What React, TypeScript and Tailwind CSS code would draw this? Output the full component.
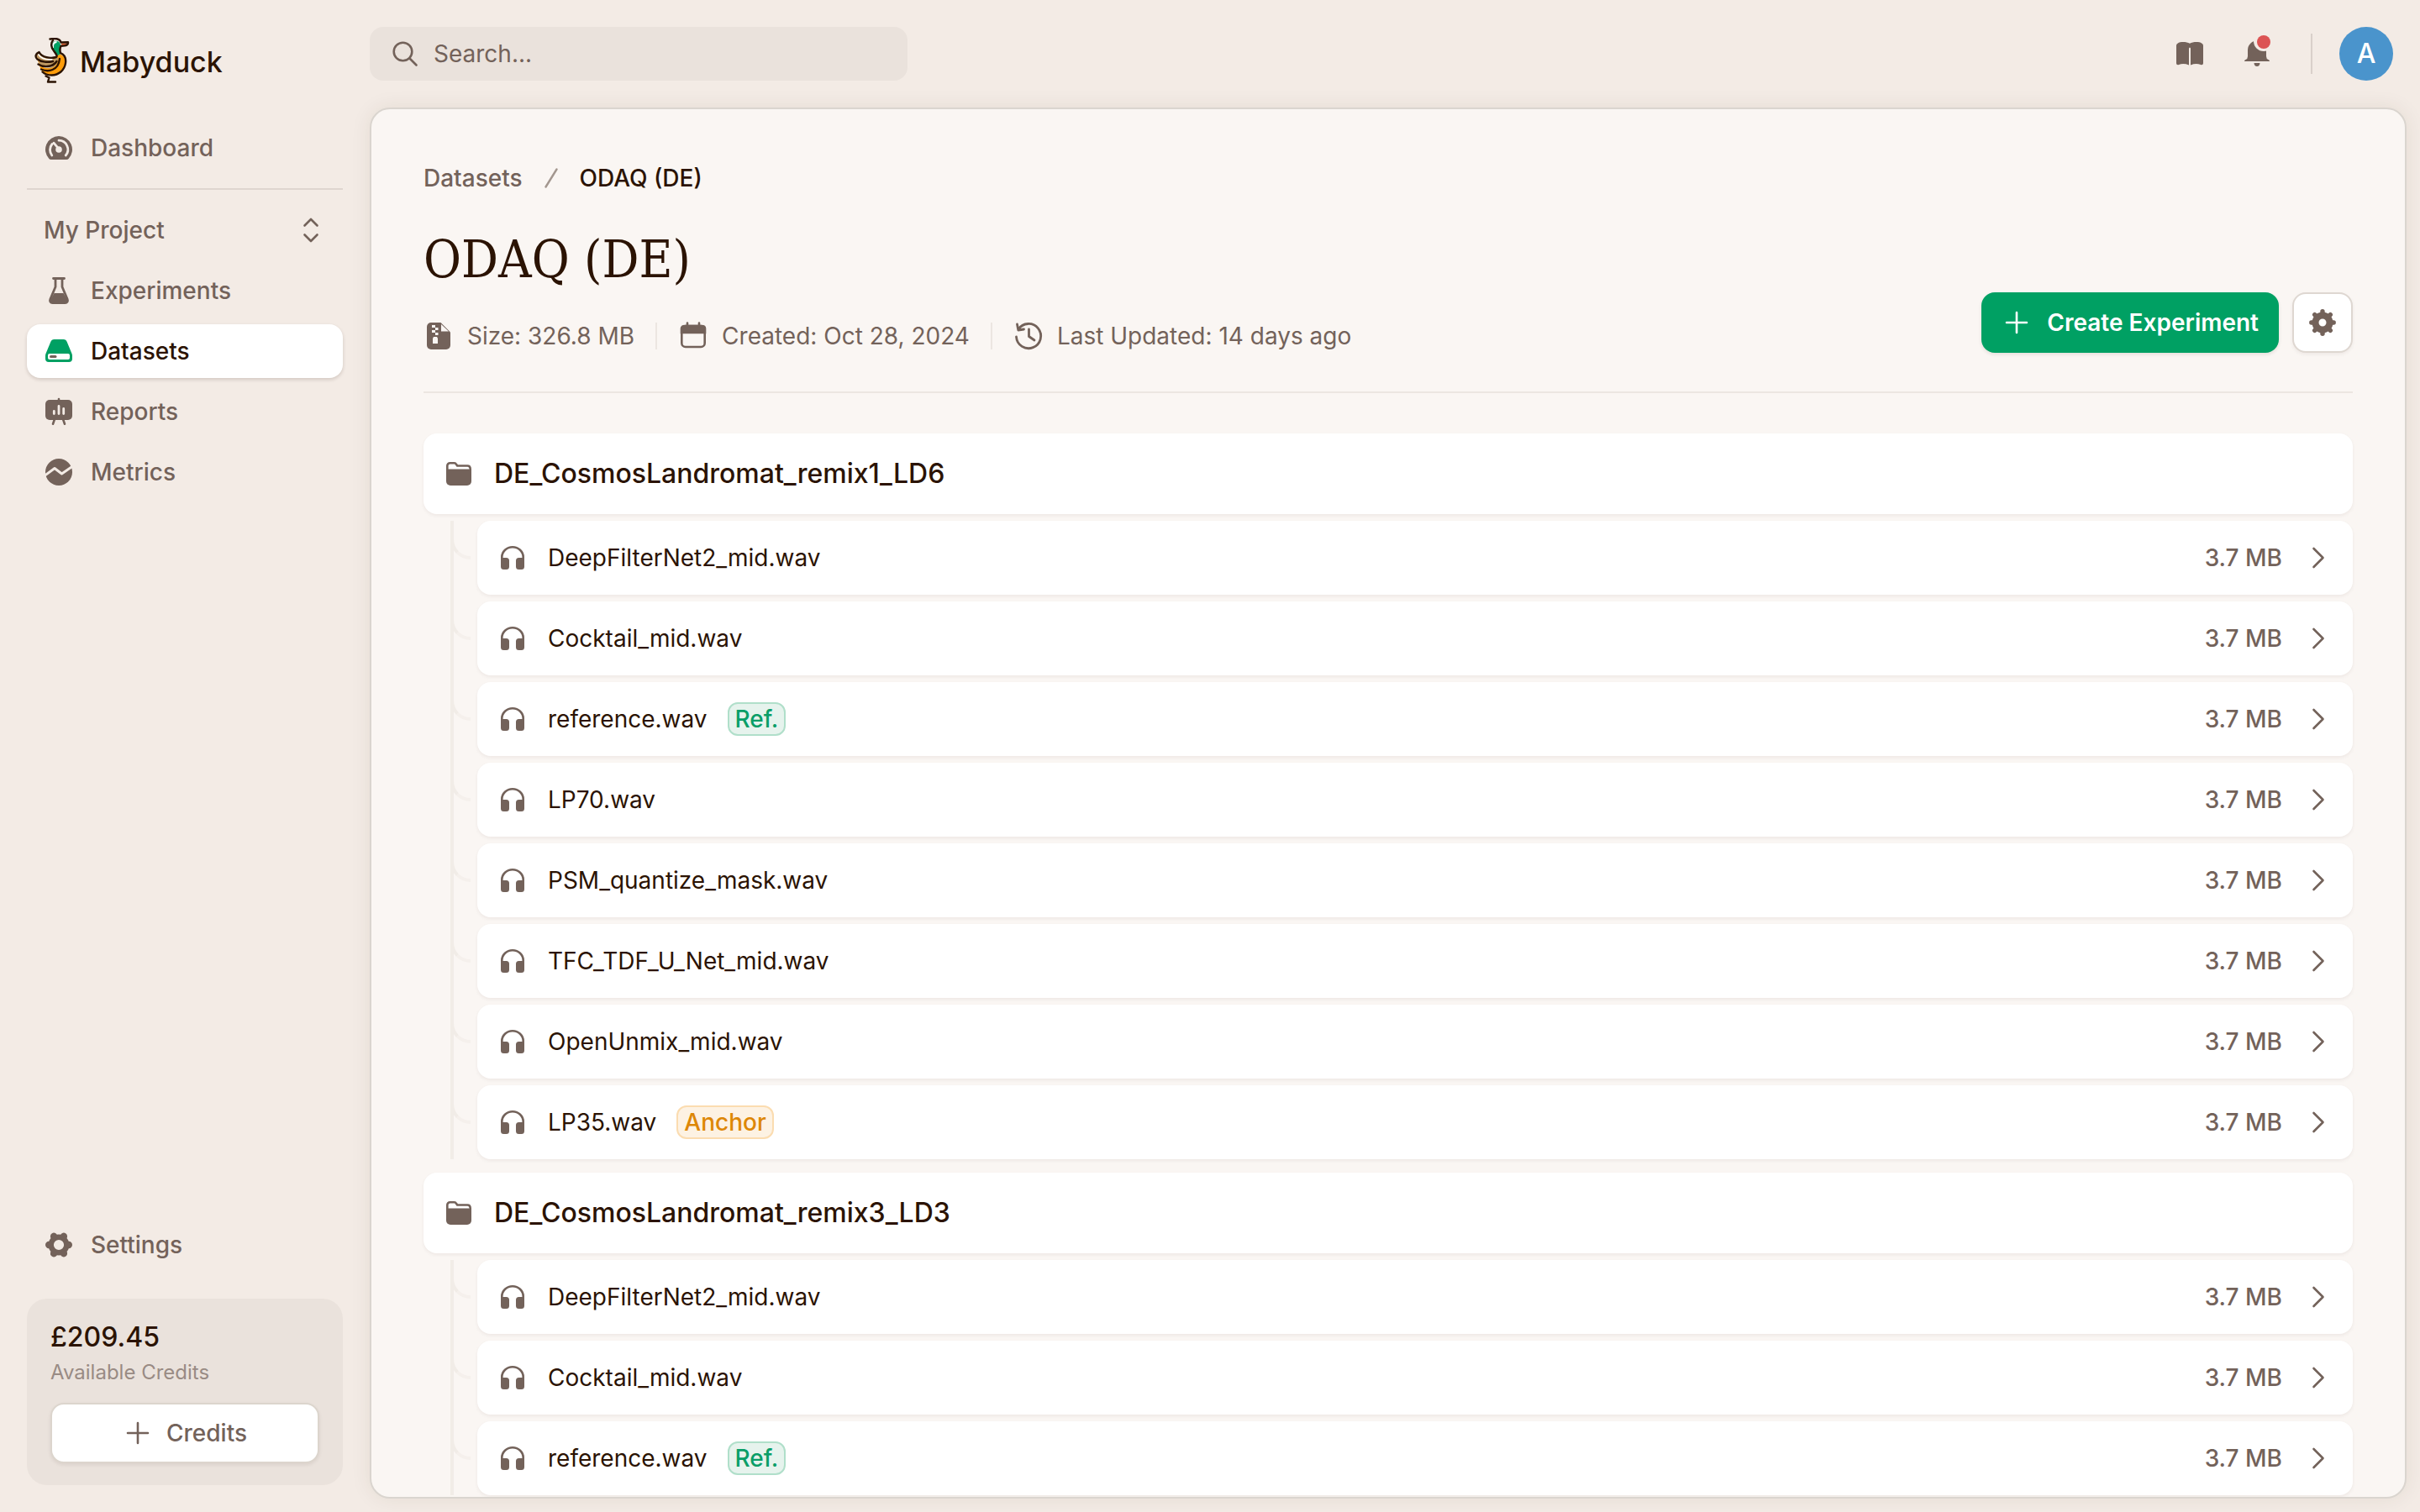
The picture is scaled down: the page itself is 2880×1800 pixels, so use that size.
import type React from "react"

interface IconProps {
  children: React.ReactNode
  className?: string
}

interface AudioFile {
  name: string
  size: string
  tag?: "Ref." | "Anchor"
}

interface Folder {
  name: string
  files: AudioFile[]
}

const folders: Folder[] = [
  {
    name: "DE_CosmosLandromat_remix1_LD6",
    files: [
      { name: "DeepFilterNet2_mid.wav", size: "3.7 MB" },
      { name: "Cocktail_mid.wav", size: "3.7 MB" },
      { name: "reference.wav", size: "3.7 MB", tag: "Ref." },
      { name: "LP70.wav", size: "3.7 MB" },
      { name: "PSM_quantize_mask.wav", size: "3.7 MB" },
      { name: "TFC_TDF_U_Net_mid.wav", size: "3.7 MB" },
      { name: "OpenUnmix_mid.wav", size: "3.7 MB" },
      { name: "LP35.wav", size: "3.7 MB", tag: "Anchor" },
    ],
  },
  {
    name: "DE_CosmosLandromat_remix3_LD3",
    files: [
      { name: "DeepFilterNet2_mid.wav", size: "3.7 MB" },
      { name: "Cocktail_mid.wav", size: "3.7 MB" },
      { name: "reference.wav", size: "3.7 MB", tag: "Ref." },
    ],
  },
]

const Icon: React.FC<IconProps> = ({ children, className = "" }) => (
  <svg viewBox="0 0 36 36" fill="currentColor" aria-hidden="true" className={`h-9 w-9 shrink-0 ${className}`}>
    {children}
  </svg>
)

const stroke = {
  fill: "none",
  stroke: "currentColor",
  strokeWidth: 2.6,
  strokeLinecap: "round",
  strokeLinejoin: "round",
} as const

const DashboardIcon = () => (
  <Icon>
    <path d="M18 4a16 16 0 0 0-11.600 27q.9 1 2.300 1h18.600q1.400 0 2.300-1A16 16 0 0 0 18 4Z" />
    <path
      d="M9.800 27a10.800 10.800 0 0 1 .2-13.500M18 9.200a10.800 10.800 0 0 1 8.200 17.800M12 12.200l5 6"
      fill="none"
      stroke="#f3ebe5"
      strokeWidth="2.800"
      strokeLinecap="round"
    />
    <circle cx="18" cy="20" r="3.800" fill="#f3ebe5" />
  </Icon>
)

const FlaskIcon = () => (
  <Icon>
    <path d="M11.500 3.500h13M14 4v9.500L7.800 28.200c-.9 2.200.3 4.300 2.700 4.300h15c2.400 0 3.600-2.100 2.700-4.300L22 13.500V4" {...stroke} strokeWidth={2.8} />
    <path d="M12.500 21h11l4.500 8q.5 3-3 3.500H11q-3.500-.5-3-3.500Z" />
  </Icon>
)

const DatasetIcon = () => (
  <Icon>
    <path d="M12.500 4h11a4.500 4.500 0 0 1 4.200 3L33.500 21q.5 1.200.5 2.500v3.500a4 4 0 0 1-4 4H6a4 4 0 0 1-4-4v-3.500Q2 22.200 2.500 21L8.300 7a4.500 4.500 0 0 1 4.200-3Z" />
    <rect x="5" y="21" width="26" height="7" rx="2" fill="#fff" />
    <rect x="7" y="23" width="8.500" height="3" rx="1.500" fill="#73625a" />
  </Icon>
)

const ReportsIcon = () => (
  <Icon>
    <rect x="2" y="4" width="32" height="24" rx="5" />
    <path d="M18 3v3M13 27l-2 5.700M23 27l2 5.700" {...stroke} />
    <path d="M12.300 17.500v3M18 11.500v9M23.700 14.500v6" stroke="#f3ebe5" strokeWidth="2.800" strokeLinecap="round" />
  </Icon>
)

const MetricsIcon = () => (
  <Icon>
    <circle cx="18" cy="18" r="16" />
    <path d="M0 23 13 13.500l8.500 6.500L36 10" fill="none" stroke="#f3ebe5" strokeWidth="3" strokeLinejoin="round" />
  </Icon>
)

const SettingsIcon = () => (
  <Icon>
    <circle cx="18" cy="18" r="9.300" fill="none" stroke="currentColor" strokeWidth="6.400" />
    {[0, 60, 120, 180, 240, 300].map((angle) => (
      <circle key={angle} cx="29.800" cy="18" r="4.200" transform={`rotate(${angle} 18 18)`} />
    ))}
  </Icon>
)

const CogIcon = () => (
  <Icon>
    <circle cx="18" cy="18" r="8.500" fill="none" stroke="currentColor" strokeWidth="8" />
    {[0, 45, 90, 135, 180, 225, 270, 315].map((angle) => (
      <path key={angle} d="M28 18h3.200" {...stroke} strokeWidth={5.4} transform={`rotate(${angle} 18 18)`} />
    ))}
  </Icon>
)

const SelectIcon = () => (
  <Icon>
    <path d="m10.500 12.500 7.500-7.500 7.500 7.500M10.500 23.500l7.500 7.500 7.500-7.500" {...stroke} />
  </Icon>
)

const SearchIcon = () => (
  <Icon>
    <circle cx="15.500" cy="15.500" r="10.800" {...stroke} />
    <path d="m23.500 23.500 8 8" {...stroke} />
  </Icon>
)

const BookIcon = () => (
  <Icon>
    <path d="M18 5.800C14.500 4 7.500 3.200 3.500 5.700Q2 6.600 2 8.300v20.700c0 2 1.500 2.600 3 2 3.500-1.300 8-1.200 12 .5V12q0-1.500 1-1.500t1 1.500v19.500c4-1.700 8.500-1.800 12-.5 1.500.6 3 0 3-2V8.300q0-1.700-1.500-2.600C28.500 3.200 21.500 4 18 5.800Z" />
  </Icon>
)

const BellIcon = () => (
  <Icon>
    <path d="M18 2.500A11 11 0 0 0 7 13.500v7.500q0 3-2.500 4.100-1.500.7-1.500 1.900h30q0-1.200-1.500-1.900Q29 24 29 21v-7.500a11 11 0 0 0-11-11ZM14.500 29h7q-.3 4-3.500 4t-3.500-4Z" />
    <circle cx="26" cy="3" r="12" fill="#f3ebe5" />
  </Icon>
)

const ArchiveIcon = () => (
  <Icon>
    <path d="M9 2h11.500L32 13.500V29a5 5 0 0 1-5 5H9a5 5 0 0 1-5-5V7a5 5 0 0 1 5-5Z" />
    <path d="M21 4v8.500h9ZM10 5h4v3h-4ZM14 8h3.500v3H14ZM10 11h4v3h-4ZM14 14h3.500v3H14ZM12 19h4l1 2v6h-6v-6Z" fill="#faf6f3" />
  </Icon>
)

const CalendarIcon = () => (
  <Icon>
    <rect x="4.300" y="6" width="27.400" height="25" rx="4.500" {...stroke} />
    <path d="M4 14V9q0-3 4-3h20q4 0 4 3v5ZM11 2.500V6M25 2.500V6" stroke="currentColor" strokeWidth="2.600" strokeLinecap="round" />
  </Icon>
)

const HistoryIcon = () => (
  <Icon>
    <path d="M3.500 19a14.600 14.600 0 1 0 2.400-9M4.500 4l1.300 7 6.700-1M18.500 10v8.500l6.500 4.500" {...stroke} strokeWidth={2.8} />
  </Icon>
)

const FolderIcon = () => (
  <Icon>
    <path d="M4.300 15V8.500a3.200 3.200 0 0 1 3.200-3.200h5.200q1.500 0 2.300 1.500l1.200 1.700h12q3.500 0 3.500 4V15" {...stroke} />
    <path d="M3 12.500h27q3 .5 3 3.500v11a5 5 0 0 1-5 5H8a5 5 0 0 1-5-5Z" />
  </Icon>
)

const HeadphonesIcon = () => (
  <Icon>
    <path d="M5.300 22v-4.700a12.700 12 0 0 1 25.400 0V22" {...stroke} />
    <path d="M4 18h6.500a3.500 3.500 0 0 1 3.500 3.500v7a3.500 3.500 0 0 1-3.500 3.500h-3A3.500 3.500 0 0 1 4 28.500ZM32 18h-6.500a3.500 3.500 0 0 0-3.500 3.500v7a3.500 3.500 0 0 0 3.500 3.500h3a3.500 3.500 0 0 0 3.500-3.500Z" />
  </Icon>
)

const ChevronIcon = () => (
  <Icon>
    <path d="m13.500 7 11 11-11 11" {...stroke} />
  </Icon>
)

const PlusIcon = () => (
  <Icon>
    <path d="M18 6v24M6 18h24" {...stroke} />
  </Icon>
)

const DuckLogo = () => (
  <svg viewBox="0 0 42 54" className="h-[54px] w-[42px] shrink-0" aria-hidden="true">
    <path d="M29 19c6 1.500 9 6.500 8 12.500C35.500 40 29 45 21.500 45 15 45 9 41.500 7 36l-3-9 22-4Z" fill="#ff9d0a" />
    <path d="M5 17.500C1 20 1 24 4.500 27c1 6.500 6 9.500 13 9.500 6 0 11-5 11-13-9 2-18 .5-23.500-6Z" fill="#c09a63" />
    <path d="M4.500 19.500c3.500 5.500 10 7 17 6.200M8 33.500c5 2 10 1.700 14-.5" fill="none" stroke="#fff" strokeWidth="1.600" />
    <path d="M21 10c0-4 2-6 5-6s5 2 5 5c0 4-2 6 0 10l-3 2c-5-3-7-7-7-11Z" fill="#00a063" />
    <path d="M22 12c-.5-4 1-7 4.500-7" fill="none" stroke="#fff" strokeWidth="2" />
    <path d="M32 6.500h8c0 2-2 3-7.500 3Z" fill="#ee6a3a" />
    <g fill="none" stroke="#2b1303" strokeWidth="2.400" strokeLinecap="round" strokeLinejoin="round">
      <path d="M18.500 1.500c8-1.500 12 0 13 4l8.500-.2c.4 3.200-1.500 4.200-8.500 4.400-1.500 3-1.500 5-.5 8.500 5 2 6.700 7 6 12-1.200 8.500-8.300 14.300-16.500 14.300-5 0-8.500-1.500-11-4" />
      <path d="M22 3c-3 3.500-2 9 1 12.500 3.500 4.500 4.500 6 3 7.500-7 2-17 .5-20.500-6C1 19 .5 23 3.500 25.500 8 29 16 29.500 22 28" />
      <path d="M4.500 31.500c5 3.500 17 4.500 22-3.500" />
      <path d="M8 37.500c8 3.500 20.500 2 22-12.500" />
      <path d="M13.500 45.500l4 2-1.500 5h9" />
    </g>
  </svg>
)

const NavItem: React.FC<{ icon: React.ReactNode; label: string; active?: boolean }> = ({ icon, label, active }) => (
  <a
    href="#"
    aria-current={active ? "page" : undefined}
    className={
      active
        ? "flex h-16 items-center gap-5 rounded-2xl bg-white px-5 font-medium text-[#2b1303] shadow-[0_2px_4px_rgba(43,19,3,0.16)]"
        : "flex h-16 items-center gap-5 rounded-2xl px-5 font-medium"
    }
  >
    <span className={active ? "text-[#00a063]" : ""}>{icon}</span>
    {label}
  </a>
)

const Sidebar = () => (
  <aside className="flex w-[440px] shrink-0 flex-col p-8 pt-0">
    <a href="#" className="flex h-36 items-center gap-3 pl-[9px] text-[34px] font-medium text-[#2b1303]">
      <DuckLogo />
      <span className="pt-1">Mabyduck</span>
    </a>
    <nav className="flex flex-col gap-2">
      <NavItem icon={<DashboardIcon />} label="Dashboard" />
      <hr className="my-2 border-t-2 border-[#dfd5cf]" />
      <button type="button" className="flex h-16 items-center justify-between px-5 font-medium">
        My Project
        <SelectIcon />
      </button>
      <NavItem icon={<FlaskIcon />} label="Experiments" />
      <NavItem icon={<DatasetIcon />} label="Datasets" active />
      <NavItem icon={<ReportsIcon />} label="Reports" />
      <NavItem icon={<MetricsIcon />} label="Metrics" />
    </nav>
    <div className="mt-auto">
      <NavItem icon={<SettingsIcon />} label="Settings" />
      <div className="mt-8 rounded-3xl bg-[#eae2dc] px-7 py-[26px]">
        <p className="text-[32px] leading-10 font-medium text-[#2b1303]">£209.45</p>
        <p className="mt-1 mb-[18px] text-2xl leading-9 text-[#998b84]">Available Credits</p>
        <button
          type="button"
          className="flex h-[72px] w-full items-center justify-center gap-4 rounded-2xl border-2 border-[#dcd5cd] bg-white font-medium shadow-[0_2px_4px_rgba(43,19,3,0.08)]"
        >
          <PlusIcon />
          Credits
        </button>
      </div>
    </div>
  </aside>
)

const TopBar = () => (
  <header className="flex h-32 shrink-0 items-center pr-4">
    <label className="flex h-16 w-[640px] items-center gap-4 rounded-2xl bg-[#eae2dc] px-6">
      <SearchIcon />
      <input
        type="search"
        aria-label="Search"
        placeholder="Search..."
        className="min-w-0 flex-1 outline-none placeholder:text-[#73625a]"
      />
    </label>
    <div className="ml-auto flex items-center gap-4">
      <button type="button" aria-label="Documentation" className="flex h-16 w-16 items-center justify-center">
        <BookIcon />
      </button>
      <button type="button" aria-label="Notifications" className="relative flex h-16 w-16 items-center justify-center">
        <BellIcon />
        <span className="absolute top-2.5 right-4 h-4 w-4 rounded-full bg-[#dc5353]" />
      </button>
    </div>
    <div className="mx-8 h-12 w-0.5 bg-[#d9d0ca]" />
    <button
      type="button"
      className="flex h-16 w-16 items-center justify-center rounded-full bg-[#4a94cc] text-[32px] font-medium text-white"
    >
      A
    </button>
  </header>
)

const Tag: React.FC<{ tag: "Ref." | "Anchor" }> = ({ tag }) => (
  <span
    className={
      tag === "Ref."
        ? "flex h-10 items-center rounded-xl border-2 border-[#b0dfca] bg-[#e6f3ed] px-[7px] font-medium text-[#0a9e68]"
        : "flex h-10 items-center rounded-xl border-2 border-[#fbdcb0] bg-[#fdf2e3] px-[7px] font-medium text-[#dd8707]"
    }
  >
    {tag}
  </span>
)

const FolderGroup: React.FC<{ folder: Folder }> = ({ folder }) => (
  <section className="flex flex-col gap-2">
    <h2 className="flex h-24 items-center gap-6 rounded-2xl bg-white px-6 text-[32px] font-medium text-[#2b1303] shadow-[0_2px_4px_rgba(43,19,3,0.06)]">
      <span className="text-[#73625a]">
        <FolderIcon />
      </span>
      {folder.name}
    </h2>
    <ul className="ml-8 flex flex-col gap-2 border-l-4 border-[#f1ece7]">
      {folder.files.map((file) => (
        <li key={file.name} className="-ml-1 flex items-start">
          <span className="mt-5 mr-2 h-[26px] w-6 rounded-bl-[24px] border-b-4 border-l-4 border-[#f5f0ec] border-l-[#f1ece7]" />
          <a
            href="#"
            className="flex h-[88px] flex-1 items-center gap-6 rounded-2xl bg-white px-6 shadow-[0_2px_4px_rgba(43,19,3,0.06)]"
          >
            <HeadphonesIcon />
            <span className="text-[#2b1303]">{file.name}</span>
            {file.tag && <Tag tag={file.tag} />}
            <span className="ml-auto font-medium">{file.size}</span>
            <ChevronIcon />
          </a>
        </li>
      ))}
    </ul>
  </section>
)

const App: React.FC = () => {
  return (
    <div className="flex h-screen overflow-hidden bg-[#f3ebe5] font-['Inter',sans-serif] text-[28px] leading-9 text-[#73625a]">
      <Sidebar />
      <div className="flex min-w-0 flex-1 flex-col pr-4 pb-4">
        <TopBar />
        <main className="min-h-0 flex-1 overflow-hidden rounded-3xl border-2 border-[#dad5cf] bg-[#faf6f3] px-[62px] pt-16 shadow-[0_0_24px_rgba(60,50,30,0.08)]">
          <nav aria-label="Breadcrumb" className="flex items-center font-medium">
            <a href="#">Datasets</a>
            <svg viewBox="0 0 16 24" className="mx-[26px] h-6 w-4" aria-hidden="true">
              <path d="M1.500 22.500 14.500 1.500" fill="none" stroke="#a3978f" strokeWidth="2.400" strokeLinecap="round" />
            </svg>
            <span className="text-[#2b1303]">ODAQ (DE)</span>
          </nav>
          <div className="mt-10 mb-12 flex items-end justify-between border-b-2 border-[#ece6e1] pb-[46px]">
            <div>
              <h1 className="font-['DejaVu_Serif_Condensed','DejaVu_Serif',serif] text-[61px] leading-[78px] text-[#2b1303]">
                ODAQ (DE)
              </h1>
              <div className="mt-8 flex h-10 items-center gap-[25px]">
                <span className="flex items-center gap-4">
                  <ArchiveIcon />
                  Size: 326.8 MB
                </span>
                <span className="h-8 w-0.5 bg-[#ece6e1]" />
                <span className="flex items-center gap-4">
                  <CalendarIcon />
                  Created: Oct 28, 2024
                </span>
                <span className="h-8 w-0.5 bg-[#ece6e1]" />
                <span className="flex items-center gap-4">
                  <HistoryIcon />
                  Last Updated: 14 days ago
                </span>
              </div>
            </div>
            <div className="flex gap-4">
              <button
                type="button"
                className="flex h-[72px] items-center gap-[18px] rounded-2xl bg-[#00a063] px-6 font-semibold text-white shadow-[0_2px_4px_rgba(43,19,3,0.1)]"
              >
                <PlusIcon />
                Create Experiment
              </button>
              <button
                type="button"
                aria-label="Dataset settings"
                className="flex h-[72px] w-[72px] items-center justify-center rounded-2xl border-2 border-[#ded7d1] bg-white shadow-[0_2px_4px_rgba(43,19,3,0.06)]"
              >
                <CogIcon />
              </button>
            </div>
          </div>
          <div className="flex flex-col gap-4">
            {folders.map((folder) => (
              <FolderGroup key={folder.name} folder={folder} />
            ))}
          </div>
        </main>
      </div>
    </div>
  )
}

export default App
